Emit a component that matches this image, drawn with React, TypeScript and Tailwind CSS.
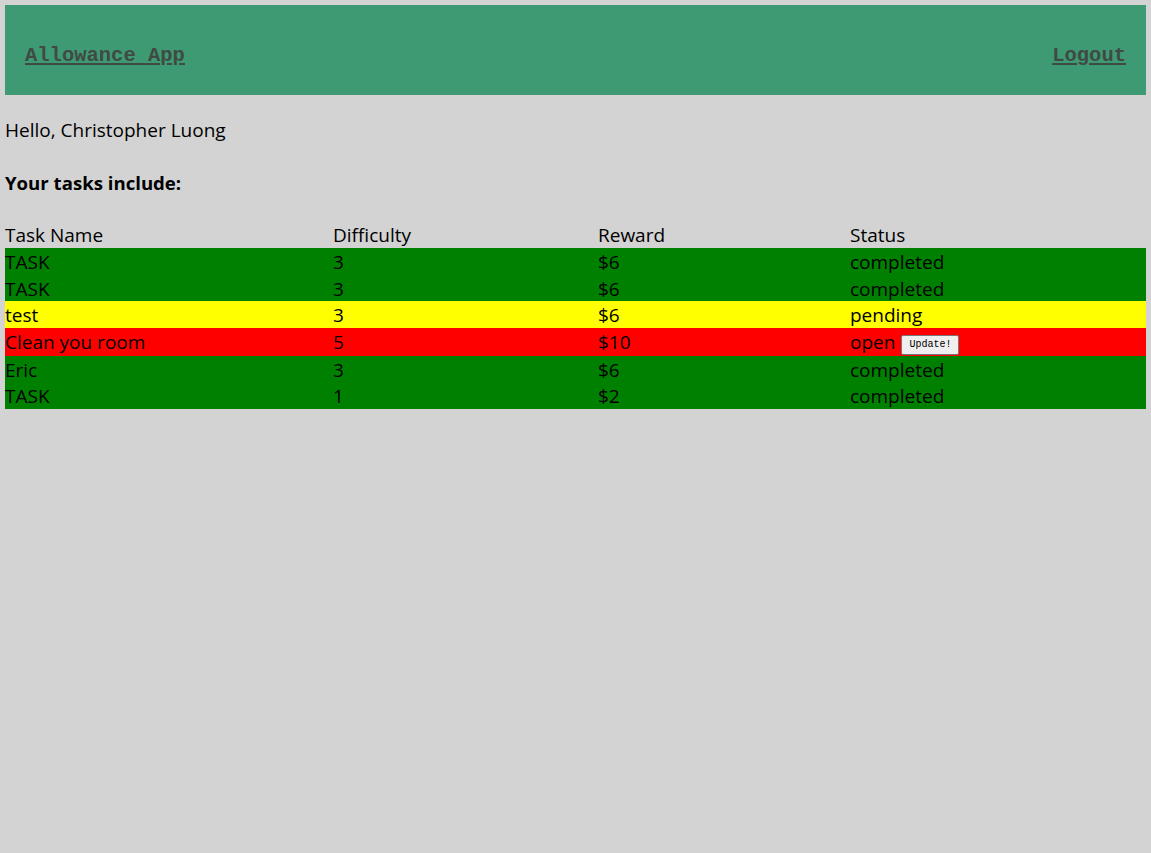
import React from "react";

type Task = {
  name: string;
  difficulty: number;
  reward: string;
  status: "completed" | "pending" | "open";
};

const tasks: Task[] = [
  { name: "TASK", difficulty: 3, reward: "$6", status: "completed" },
  { name: "TASK", difficulty: 3, reward: "$6", status: "completed" },
  { name: "test", difficulty: 3, reward: "$6", status: "pending" },
  { name: "Clean you room", difficulty: 5, reward: "$10", status: "open" },
  { name: "Eric", difficulty: 3, reward: "$6", status: "completed" },
  { name: "TASK", difficulty: 1, reward: "$2", status: "completed" },
];

const rowColor: Record<Task["status"], string> = {
  completed: "bg-[#008000]",
  pending: "bg-[#ffff00]",
  open: "bg-[#ff0000]",
};

const cols = "grid grid-cols-[328px_265px_252px_1fr]";

export default function App() {
  return (
    <div className="min-h-screen bg-[#d3d3d3] p-[5px] text-black font-['Open_Sans',sans-serif] text-[19px]">
      <nav className="h-[90px] bg-[#3e9a72] flex items-center justify-between px-5 pt-[12px] font-['Liberation_Mono',monospace] font-bold text-[20.5px] text-[#404a45]">
        <a href="#" className="underline">
          Allowance App
        </a>
        <a href="#" className="underline">
          Logout
        </a>
      </nav>

      <p className="mt-[22px] leading-[26px]">Hello, Christopher Luong</p>
      <h3 className="mt-[27px] font-bold leading-[26px] text-[18.6px]">Your tasks include:</h3>

      <div className="mt-[27px]">
        <div className={`${cols} leading-[25px]`}>
          <div>Task Name</div>
          <div>Difficulty</div>
          <div>Reward</div>
          <div>Status</div>
        </div>
        {tasks.map((t, i) => (
          <div
            key={i}
            className={`${cols} ${rowColor[t.status]} ${
              t.status === "open" ? "h-[28px]" : "h-[26.6px]"
            } items-center`}
          >
            <div>{t.name}</div>
            <div>{t.difficulty}</div>
            <div>{t.reward}</div>
            <div className="flex items-center gap-[6px]">
              {t.status}
              {t.status === "open" && (
                <button className="h-[20px] w-[58px] mt-[6px] bg-[#efefef] border border-[#767676] rounded-[2px] font-['Liberation_Mono',monospace] text-[10px] leading-none">
                  Update!
                </button>
              )}
            </div>
          </div>
        ))}
      </div>
    </div>
  );
}
